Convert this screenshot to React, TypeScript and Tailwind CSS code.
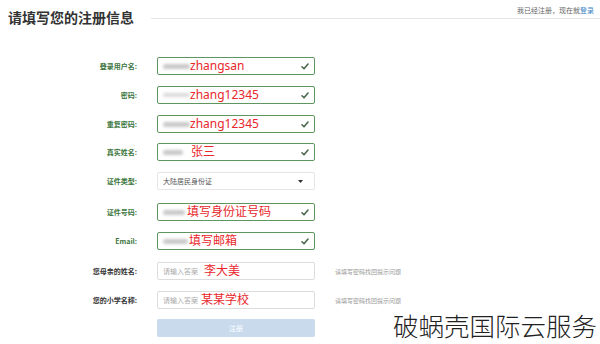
import React from "react";

const cjk = { fontFamily: '"Noto Sans CJK SC", "Noto Sans", sans-serif' };
const red = { fontFamily: '"Noto Sans", "Noto Sans CJK SC", sans-serif' };

function Check() {
  return (
    <svg width="8" height="7" viewBox="0 0 8 7" className="shrink-0">
      <path d="M1 3.8 L3 5.8 L7 1" fill="none" stroke="#4f6b4f" strokeWidth="1.6" strokeLinecap="round" strokeLinejoin="round" />
    </svg>
  );
}

function Smudge({ w, dark }: { w: number; dark?: boolean }) {
  return (
    <div
      className={dark ? "h-[5px] rounded-full bg-[#c8c8c8] blur-[1.5px]" : "h-[4px] rounded-full bg-[#dadada] blur-[1.5px]"}
      style={{ width: w }}
    />
  );
}

function Label({ text, green = true }: { text: string; green?: boolean }) {
  return (
    <div className={`w-[137px] text-right text-[7px] leading-[18px] font-semibold ${green ? "text-[#3c763d]" : "text-[#333]"}`}>
      {text}
    </div>
  );
}

function OkInput({ smudge, text, textLeft, light }: { smudge: number; text: string; textLeft: number; light?: boolean }) {
  return (
    <div className="relative w-[158px] h-[18px] rounded-[2px] border border-[#5f9660] bg-white flex items-center pl-[5px] pr-[5px]">
      <Smudge w={smudge} dark={!light} />
      <div className="flex-1" />
      <Check />
      <span
        className="absolute top-1/2 -translate-y-1/2 text-[12px] leading-none text-[#e8262b] whitespace-nowrap"
        style={{ left: textLeft, ...red }}
      >
        {text}
      </span>
    </div>
  );
}

function QInput({ text, textLeft }: { text: string; textLeft: number }) {
  return (
    <div className="relative w-[158px] h-[18px] rounded-[2px] border border-[#dcdcdc] bg-white flex items-center pl-[5px]">
      <span className="text-[7px] text-[#aaa]">请输入答案</span>
      <span
        className="absolute top-1/2 -translate-y-1/2 text-[12px] leading-none text-[#e8262b] whitespace-nowrap"
        style={{ left: textLeft, ...red }}
      >
        {text}
      </span>
    </div>
  );
}

export default function App() {
  return (
    <div className="relative w-[600px] h-[344px] overflow-hidden bg-white" style={cjk}>
      <div className="flex pt-[5px] pl-[8px]">
        <div className="h-[24px] leading-[24px] text-[14px] font-bold text-[#333] whitespace-nowrap">请填写您的注册信息</div>
        <div className="flex-1 ml-[17px] flex flex-col">
          <div className="h-[10px] leading-[10px] text-[7px] text-[#666] text-right pr-[6px]">
            我已经注册，现在就<span className="text-[#3b82c4]">登录</span>
          </div>
          <div className="mt-[3px] border-t border-[#e6e6e6]" />
        </div>
      </div>

      <div className="mt-[28px] flex flex-col">
        <div className="flex gap-[20px] items-center">
          <Label text="登录用户名:" />
          <OkInput smudge={27} text="zhangsan" textLeft={32} />
        </div>
        <div className="mt-[11px] flex gap-[20px] items-center">
          <Label text="密码:" />
          <OkInput smudge={27} text="zhang12345" textLeft={32} light />
        </div>
        <div className="mt-[11px] flex gap-[20px] items-center">
          <Label text="重复密码:" />
          <OkInput smudge={27} text="zhang12345" textLeft={32} />
        </div>
        <div className="mt-[10px] flex gap-[20px] items-center">
          <Label text="真实姓名:" />
          <OkInput smudge={20} text="张三" textLeft={33} />
        </div>
        <div className="mt-[11px] flex gap-[20px] items-center">
          <Label text="证件类型:" />
          <div className="w-[158px] h-[18px] rounded-[2px] border border-[#e6e6e6] bg-white flex items-center pl-[5px] pr-[11px]">
            <span className="text-[7px] text-[#555]">大陆居民身份证</span>
            <div className="flex-1" />
            <svg width="5" height="3" viewBox="0 0 5 3">
              <path d="M0 0 L5 0 L2.5 3 Z" fill="#333" />
            </svg>
          </div>
        </div>
        <div className="mt-[13px] flex gap-[20px] items-center">
          <Label text="证件号码:" />
          <OkInput smudge={22} text="填写身份证号码" textLeft={29} />
        </div>
        <div className="mt-[11px] flex gap-[20px] items-center">
          <Label text="Email:" />
          <OkInput smudge={25} text="填写邮箱" textLeft={31} />
        </div>
        <div className="mt-[12px] flex gap-[20px] items-center">
          <Label text="您母亲的姓名:" green={false} />
          <QInput text="李大美" textLeft={46} />
          <span className="text-[6px] text-[#999]">请填写密码找回提示问题</span>
        </div>
        <div className="mt-[11px] flex gap-[20px] items-center">
          <Label text="您的小学名称:" green={false} />
          <QInput text="某某学校" textLeft={43} />
          <span className="text-[6px] text-[#999]">请填写密码找回提示问题</span>
        </div>
        <div className="mt-[10px] flex gap-[20px] items-center">
          <div className="w-[137px]" />
          <div className="w-[158px] h-[18px] rounded-[2px] bg-[#c8daec] flex items-center justify-center text-[7px] text-white">
            注册
          </div>
        </div>
      </div>

      <div
        className="absolute left-[393px] top-[308px] text-[25.5px] leading-[34px] font-light text-[#222] whitespace-nowrap"
        style={cjk}
      >
        破蜗壳国际云服务
      </div>
    </div>
  );
}
